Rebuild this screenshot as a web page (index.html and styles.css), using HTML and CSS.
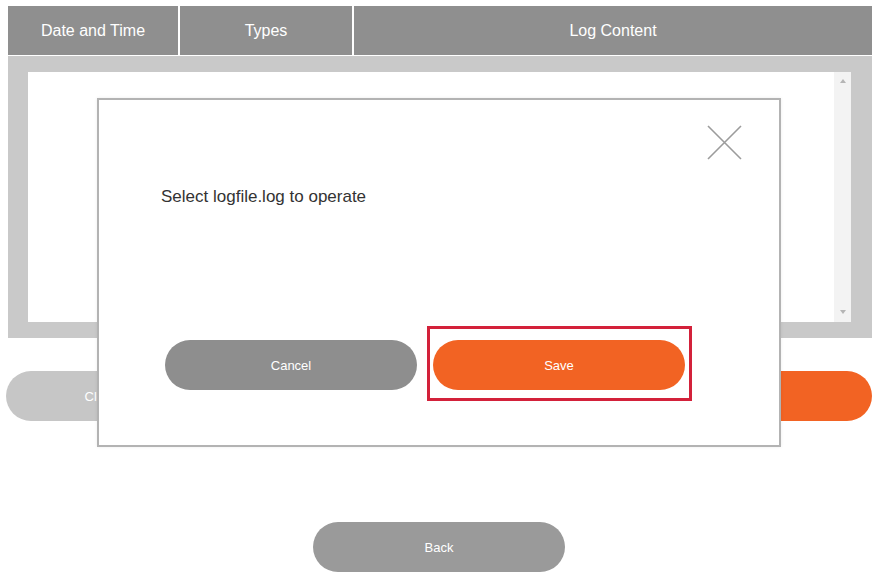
FILE: index.html
```html
<!DOCTYPE html>
<html lang="en">

<head>
    <meta charset="UTF-8">
    <meta name="viewport" content="width=device-width, initial-scale=1.0">
    <title>Log Files</title>
    <link rel="stylesheet" href="styles.css">
</head>

<body>
    <div class="page">
        <div class="log-head">
            <div class="head-cell">Date and Time</div>
            <div class="head-cell">Types</div>
            <div class="head-cell">Log Content</div>
        </div>

        <div class="log-panel">
            <div class="log-body">
                <div class="scroll-track">
                    <span class="arrow up"></span>
                    <span class="arrow down"></span>
                </div>
            </div>
        </div>

        <div class="actions">
            <button class="pill-button light">Clear Logs</button>
            <button class="pill-button orange">Export Logs</button>
        </div>

        <button class="pill-button back-button">Back</button>
    </div>

    <!-- save dialog -->
    <div class="dialog">
        <button class="close-button">
            <svg width="35" height="35" viewBox="0 0 35 35">
                <path d="M1 1 L34 34 M34 1 L1 34" stroke="#9c9c9c" stroke-width="1.6" fill="none" />
            </svg>
        </button>
        <p class="dialog-text">Select logfile.log to operate</p>
        <div class="dialog-actions">
            <button class="pill-button grey cancel-button">Cancel</button>
            <div class="highlight">
                <button class="pill-button orange">Save</button>
            </div>
        </div>
    </div>
</body>

</html>
```

FILE: styles.css
```css
body {
    font-family: "Liberation Sans", Arial, sans-serif;
    margin: 0;
    padding: 0;
    background-color: #fff;
}

.page {
    padding-top: 6px;
}

.log-head {
    display: grid;
    grid-template-columns: 170px 172px 1fr;
    gap: 2px;
    margin: 0 6px 0 8px;
}

.head-cell {
    background-color: #8f8f8f;
    color: #fff;
    font-size: 16px;
    height: 49px;
    line-height: 49px;
    text-align: center;
}

.log-panel {
    margin: 1px 6px 0 8px;
    padding: 16px 21px 16px 20px;
    background-color: #c9c9c9;
}

.log-body {
    height: 250px;
    background-color: #fff;
    display: flex;
    justify-content: flex-end;
}

.scroll-track {
    width: 17px;
    background-color: #f3f3f3;
    display: flex;
    flex-direction: column;
    justify-content: space-between;
    align-items: center;
    padding: 7px 0 8px;
}

.arrow {
    width: 0;
    height: 0;
    border-left: 3px solid transparent;
    border-right: 3px solid transparent;
}

.arrow.up {
    border-bottom: 4px solid #b5b5b5;
}

.arrow.down {
    border-top: 4px solid #b5b5b5;
}

.pill-button {
    display: block;
    height: 50px;
    width: 252px;
    border: none;
    border-radius: 25px;
    color: #fff;
    font-family: inherit;
    font-size: 13px;
    text-align: center;
    padding: 0;
}

.pill-button.grey {
    background-color: #8e8e8e;
}

.pill-button.light {
    background-color: #c6c6c6;
    width: 220px;
}

.pill-button.orange {
    background-color: #f26323;
}

.actions {
    display: flex;
    justify-content: space-between;
    margin: 33px 6px 0 6px;
}

.pill-button.back-button {
    margin: 101px auto 0;
    background-color: #9a9a9a;
}

.dialog {
    position: absolute;
    left: 97px;
    top: 98px;
    width: 684px;
    height: 349px;
    box-sizing: border-box;
    border: 2px solid #b3b3b3;
    background-color: #fff;
    padding: 87px 0 0 66px;
    box-shadow: 0 0 3px rgba(0, 0, 0, 0.08);
}

.close-button {
    position: absolute;
    top: 25px;
    left: 608px;
    width: 35px;
    height: 35px;
    padding: 0;
    border: none;
    background: none;
}

.close-button svg {
    display: block;
}

.dialog-text {
    margin: 0 0 0 -4px;
    font-size: 17px;
    line-height: 20px;
    color: #333;
}

.dialog-actions {
    display: flex;
    align-items: flex-start;
    gap: 10px;
    margin-top: 119px;
}

.cancel-button {
    margin-top: 14px;
}

.highlight {
    border: 3px solid #d3213a;
    padding: 11px 4px 8px 3px;
}
```
